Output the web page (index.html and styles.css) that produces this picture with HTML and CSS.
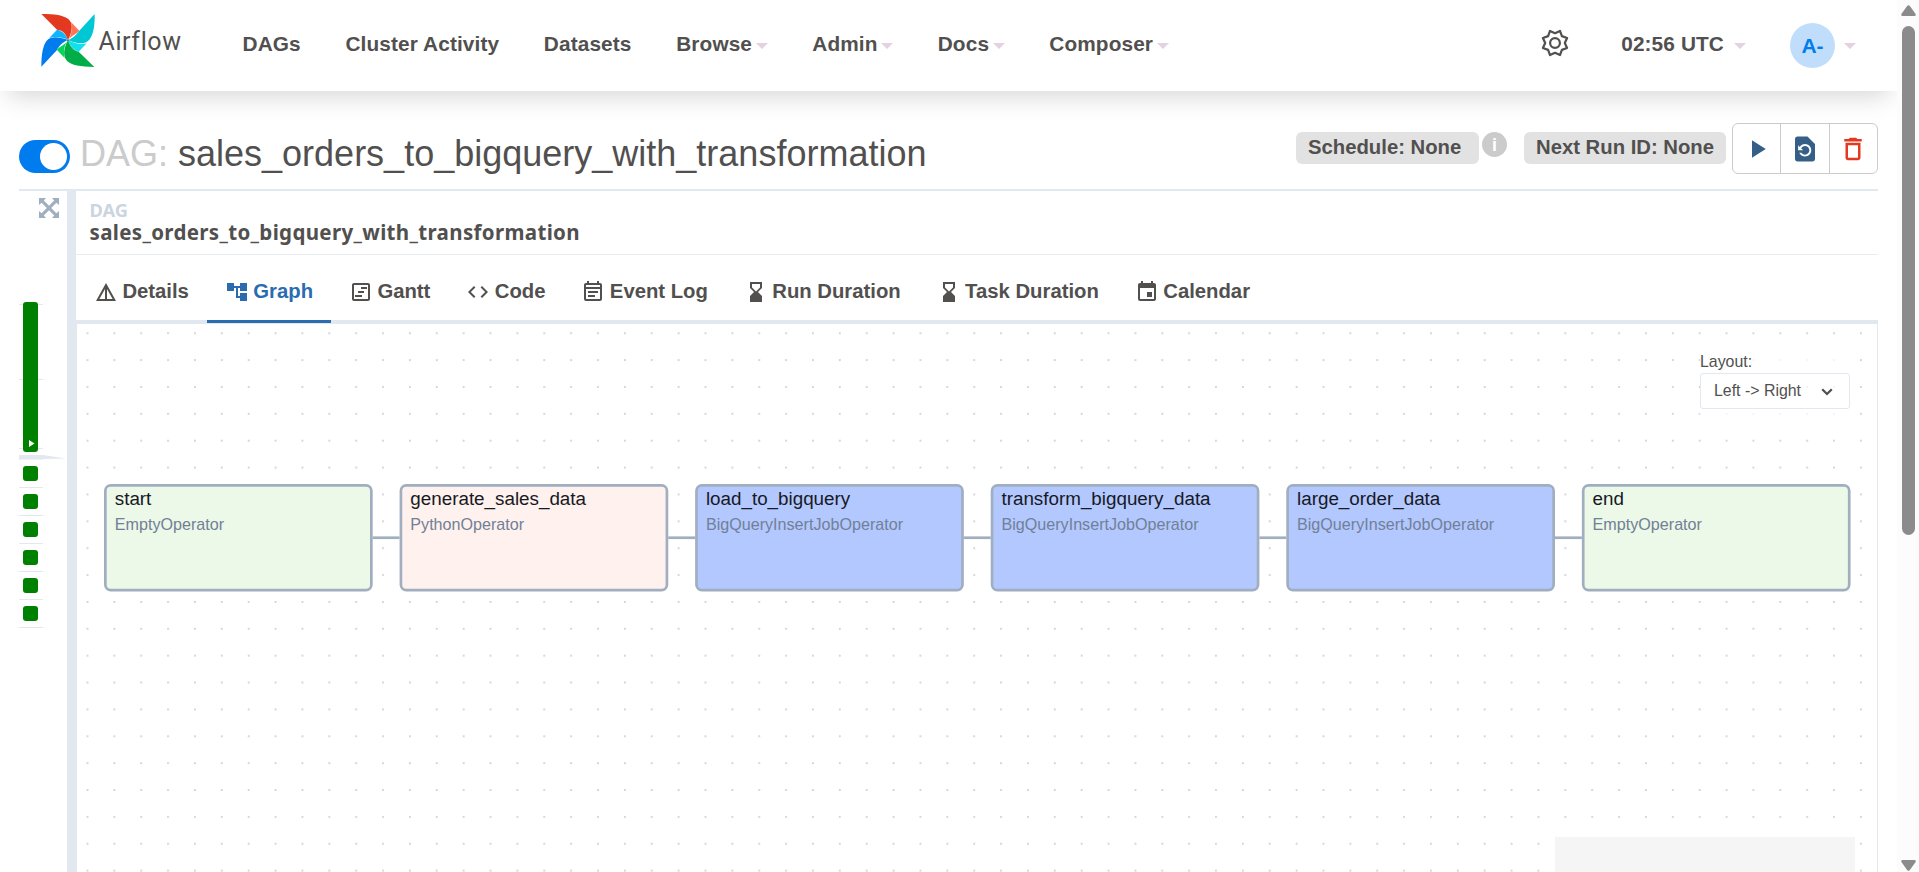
FILE: index.html
```html
<!DOCTYPE html>
<html lang="en">
<head>
<meta charset="utf-8">
<title>sales_orders_to_bigquery_with_transformation - Airflow</title>
<link rel="stylesheet" href="styles.css">
</head>
<body>
<div class="page">
  <header class="navbar">
    <a class="brand">
      <svg class="brand-mark" viewBox="120 40 168 166">
        <path fill="#017cee" d="M124 201C124 160 130 135 140 123C155 108 175 112 204 121C188 127 176 140 171 151Z"/>
        <path fill="#0cb6ff" d="M204 121C185 111 160 110 147 116L171 90C187 94 198 104 204 121Z"/>
        <path fill="#e43921" d="M124 43C165 43 190 47 205 58C219 70 219 92 204 121C198 104 190 92 171 90Z"/>
        <path fill="#ff7557" d="M213 67L238 93C230 103 214 108 204 121C215 104 218 85 213 67Z"/>
        <path fill="#00c7d4" d="M284 43C285 85 278 108 268 120C256 134 235 134 204 121C222 114 230 103 238 93Z"/>
        <path fill="#11e1ee" d="M204 121C225 133 245 135 260 131L236 156C222 152 210 140 204 121Z"/>
        <path fill="#00ad46" d="M283 202C240 202 215 196 202 185C188 170 190 148 204 121C210 141 222 154 236 156Z"/>
        <path fill="#04d659" d="M204 121C193 137 189 155 194 175L171 151C176 141 196 137 204 121Z"/>
        <circle cx="204" cy="122" r="2.5" fill="#51504f"/>
      </svg>
      <span class="brand-name">Airflow</span>
    </a>
    <nav class="menu">
      <a>DAGs</a>
      <a>Cluster Activity</a>
      <a>Datasets</a>
      <a>Browse<i class="caret"></i></a>
      <a>Admin<i class="caret"></i></a>
      <a>Docs<i class="caret"></i></a>
      <a>Composer<i class="caret"></i></a>
    </nav>
    <div class="account">
      <svg class="gear" viewBox="-14 -14 28 28" fill="none" stroke="#51504f" stroke-width="2.2" stroke-linejoin="round">
        <path d="M5 -12.1L0 -9.8L-5 -12.100L-6.900 -6.900L-12.100 -5L-9.800 0L-12.100 5L-6.900 6.900L-5 12.100L0 9.800L5 12.100L6.900 6.900L12.100 5L9.800 0L12.100 -5L6.900 -6.900Z"/>
        <circle r="4.9"/>
      </svg>
      <a class="clock">02:56 UTC<i class="caret"></i></a>
      <a class="user"><span class="avatar">A-</span><i class="caret"></i></a>
    </div>
  </header>

  <main class="content">
    <section class="dag-header">
      <span class="toggle"><span class="knob"></span></span>
      <h3 class="dag-title"><span class="muted">DAG:</span> sales_orders_to_bigquery_with_transformation</h3>
      <div class="dag-meta">
        <span class="pill schedule">Schedule: None</span>
        <span class="info">i</span>
        <span class="pill next-run">Next Run ID: None</span>
        <div class="actions">
          <button><svg viewBox="0 0 24 24" fill="#355f87"><path d="M8 5v14l11-7z"/></svg></button>
          <button><svg viewBox="0 0 24 24" fill="#355f87"><path d="M14 2H6c-1.1 0-1.99.9-1.99 2L4 20c0 1.1.89 2 1.99 2H18c1.1 0 2-.9 2-2V8l-6-6zm-2 16c-2.05 0-3.81-1.24-4.58-3h1.71c.63.9 1.68 1.5 2.87 1.5 1.93 0 3.5-1.57 3.5-3.5S13.93 9.5 12 9.5c-1.35 0-2.52.78-3.1 1.9l1.6 1.6h-4V9l1.3 1.3C8.69 8.92 10.23 8 12 8c2.76 0 5 2.24 5 5s-2.24 5-5 5z"/></svg></button>
          <button><svg viewBox="0 0 24 24" fill="#e43921"><path d="M6 19c0 1.1.9 2 2 2h8c1.1 0 2-.9 2-2V7H6v12zM8 9h8v10H8V9zm7.5-5l-1-1h-5l-1 1H5v2h14V4z"/></svg></button>
        </div>
      </div>
    </section>

    <section class="workspace">
      <aside class="grid">
        <svg class="expand" viewBox="0 0 20 20" fill="#a0aec0"><path d="M0 0h7L4.8 2.6 10 7.8l5.2-5.2L13 0h7v7l-2.6-2.2L12.2 10l5.2 5.2L20 13v7h-7l2.2-2.6L10 12.2l-5.2 5.2L7 20H0v-7l2.6 2.2L7.8 10 2.600 4.800 0 7z"/></svg>
        <div class="duration">
          <div class="bar"><svg viewBox="0 0 6 7" fill="#fff"><path d="M0 0v7l5.500-3.500z"/></svg></div>
        </div>
        <svg class="wedge" viewBox="0 0 48 4"><path fill="#e2e8f0" d="M0 0h24l23 3.600L24 4H0z"/></svg>
        <div class="task"></div>
        <div class="task"></div>
        <div class="task"></div>
        <div class="task"></div>
        <div class="task"></div>
        <div class="task"></div>
      </aside>
      <div class="divider"></div>
      <div class="details">
        <div class="crumb">
          <span class="crumb-label">DAG</span>
          <span class="crumb-name">sales_orders_to_bigquery_with_transformation</span>
        </div>
        <div class="tabs">
          <a class="tab"><svg viewBox="0 0 24 24"><path d="M12 3 2 21h20L12 3zm1 5.920L18.600 19H13V8.920zm-2 0V19H5.400L11 8.920z"/></svg>Details</a>
          <a class="tab active"><svg viewBox="0 0 24 24"><path d="M22 11V3h-7v3H9V3H2v8h7V8h2v10h4v3h7v-8h-7v3h-2V8h2v3z"/></svg>Graph</a>
          <a class="tab"><svg viewBox="0 0 24 24"><path d="M19 3H5c-1.100 0-2 .9-2 2v14c0 1.100.9 2 2 2h14c1.100 0 2-.9 2-2V5c0-1.100-.9-2-2-2zm0 16H5V5h14v14zM12 7h6v2h-6zM9 11h6v2H9zM6 15h7v2H6z"/></svg>Gantt</a>
          <a class="tab"><svg viewBox="0 0 24 24"><path d="M9.400 16.600 4.800 12l4.600-4.600L8 6l-6 6 6 6 1.400-1.400zm5.200 0 4.600-4.600-4.600-4.600L16 6l6 6-6 6-1.400-1.400z"/></svg>Code</a>
          <a class="tab"><svg viewBox="0 0 24 24"><path d="M19 3h-1V1h-2v2H8V1H6v2H5c-1.100 0-2 .9-2 2v14a2 2 0 0 0 2 2h14c1.100 0 2-.9 2-2V5c0-1.100-.9-2-2-2zm0 16H5V9h14v10zm0-12H5V5h14v2zM7 11h10v2H7zm0 4h7v2H7z"/></svg>Event Log</a>
          <a class="tab"><svg viewBox="0 0 24 24"><path d="M18 22l-.01-6L14 12l3.990-4.010L18 2H6v6l4 4-4 3.990V22h12zM8 7.500V4h8v3.500l-4 4-4-4z"/></svg>Run Duration</a>
          <a class="tab"><svg viewBox="0 0 24 24"><path d="M18 22l-.01-6L14 12l3.990-4.010L18 2H6v6l4 4-4 3.990V22h12zM8 7.500V4h8v3.500l-4 4-4-4z"/></svg>Task Duration</a>
          <a class="tab"><svg viewBox="0 0 24 24"><path d="M17 12h-5v5h5v-5zM16 1v2H8V1H6v2H5c-1.110 0-1.990.9-1.990 2L3 19a2 2 0 0 0 2 2h14c1.100 0 2-.9 2-2V5c0-1.100-.9-2-2-2h-1V1h-2zm3 18H5V8h14v11z"/></svg>Calendar</a>
        </div>
        <div class="graph">
          <svg class="dots" width="1800" height="548">
            <defs><pattern id="dot" x="-3.400" y="-4.700" width="26.870" height="26.870" patternUnits="userSpaceOnUse"><circle cx="13.900" cy="13.900" r=".67" fill="#91919a"/></pattern></defs>
            <rect width="1800" height="548" fill="url(#dot)"/>
          </svg>
          <div class="layout-picker">
            <label>Layout:</label>
            <div class="select">Left -&gt; Right
              <svg viewBox="0 0 12 8" fill="none" stroke="#51504f" stroke-width="2.300"><path d="M1.200 1.300L6 6l4.800-4.700"/></svg>
            </div>
          </div>
          <div class="flow">
            <div class="node empty"><b>start</b><span>EmptyOperator</span></div>
            <i class="edge"></i>
            <div class="node python"><b>generate_sales_data</b><span>PythonOperator</span></div>
            <i class="edge"></i>
            <div class="node bigquery"><b>load_to_bigquery</b><span>BigQueryInsertJobOperator</span></div>
            <i class="edge"></i>
            <div class="node bigquery"><b>transform_bigquery_data</b><span>BigQueryInsertJobOperator</span></div>
            <i class="edge"></i>
            <div class="node bigquery"><b>large_order_data</b><span>BigQueryInsertJobOperator</span></div>
            <i class="edge"></i>
            <div class="node empty"><b>end</b><span>EmptyOperator</span></div>
          </div>
          <div class="minimap"></div>
        </div>
      </div>
    </section>
  </main>
</div>
<div class="scrollbar">
  <svg viewBox="0 0 15 11" fill="#8b8b8b"><path d="M6.300.8Q7.500-.4 8.700.8L14.600 9Q15.200 11 13.500 11H1.500Q-.2 11 .4 9Z"/></svg>
  <div class="thumb"></div>
  <svg class="down" viewBox="0 0 15 11" fill="#8b8b8b"><path d="M6.300 10.200Q7.500 11.400 8.700 10.200L14.600 2Q15.200 0 13.500 0H1.500Q-.2 0 .4 2Z"/></svg>
</div>
</body>
</html>
```
FILE: styles.css
```css
* { box-sizing: border-box; }

body {
  margin: 0;
  height: 872px;
  overflow: hidden;
  display: flex;
  background: #fff;
  color: #51504f;
  font-family: "Liberation Sans", Arial, sans-serif;
}

svg { display: block; flex: none; }

.page { width: 1897px; height: 872px; display: flex; flex-direction: column; overflow: hidden; }

/* Top navigation */
.navbar {
  flex: none;
  height: 91px;
  display: flex;
  align-items: flex-start;
  padding-left: 40px;
  background: #fff;
  box-shadow: 0 13px 24px -8px rgba(0, 0, 0, .17);
}
.brand { display: flex; width: 202.5px; padding-top: 13px; }
.brand-mark { width: 56px; height: 55.3px; }
.brand-name {
  margin-left: 2.5px;
  padding-top: 14px;
  font: 400 25px/30px Roboto, sans-serif;
  letter-spacing: .6px;
}
.menu { display: flex; gap: 44.7px; }
.menu a, .clock {
  display: flex;
  align-items: center;
  height: 24px;
  margin-top: 32px;
  font-size: 20.8px;
  font-weight: 700;
  letter-spacing: .12px;
  white-space: nowrap;
}
.caret {
  margin: 4px 0 0 3.5px;
  border: 6px solid transparent;
  border-top-color: #e2d2e2;
  border-bottom: 0;
}
.account { display: flex; margin-left: auto; padding-right: 41px; }
.gear { width: 28px; height: 28px; margin: 29px 52px 0 0; }
.clock .caret { margin-left: 10px; }
.user { display: flex; margin: 23px 0 0 44px; }
.avatar {
  width: 45px;
  height: 45px;
  border-radius: 50%;
  background: #c0defc;
  color: #017cee;
  font-size: 21px;
  font-weight: 700;
  line-height: 46px;
  text-align: center;
}
.user .caret { margin: 20px 0 0 9px; height: 6px; }

/* DAG heading */
.content { flex: 1; padding: 32px 19px 0; }
.dag-header {
  display: flex;
  height: 68px;
  border-bottom: 2px solid #e2e8f0;
}
.toggle {
  width: 51px;
  height: 33px;
  margin-top: 17px;
  padding: 3px;
  border-radius: 17px;
  background: #017cee;
  display: flex;
  justify-content: flex-end;
}
.knob { width: 27px; height: 27px; border-radius: 50%; background: #fff; }
.dag-title {
  margin: 10px 0 0 10px;
  font-size: 36px;
  font-weight: 400;
  line-height: 42px;
  white-space: nowrap;
}
.muted { color: #cbcbcb; }
.dag-meta { display: flex; align-items: flex-start; margin-left: auto; }
.pill {
  height: 32px;
  margin-top: 9px;
  border-radius: 6px;
  background: #e2e2e2;
  padding-left: 12px;
  font-size: 20.3px;
  font-weight: 700;
  line-height: 30px;
  white-space: nowrap;
}
.schedule { width: 183px; }
.info {
  width: 25px;
  height: 25px;
  margin: 9px 17px 0 3px;
  border-radius: 50%;
  background: #cbcbcb;
  color: #fff;
  font-size: 18px;
  font-weight: 700;
  line-height: 26px;
  text-align: center;
}
.next-run { width: 202px; margin-right: 6px; }
.actions {
  display: flex;
  width: 146px;
  height: 51px;
  border: 1px solid #cbcbcb;
  border-radius: 6px;
}
.actions button {
  flex: 1;
  display: flex;
  align-items: center;
  justify-content: center;
  padding: 0;
  border: 0;
  background: none;
}
.actions button + button { border-left: 1px solid #cbcbcb; }
.actions svg { width: 30px; height: 30px; }

/* Run grid */
.workspace { display: flex; height: 681px; }
.grid { width: 48px; flex: none; }
.expand { width: 20px; height: 20px; margin: 7px 0 0 20px; }
.duration {
  width: 24px;
  height: 150px;
  margin-top: 84px;
  padding-left: 4px;
  background:
    linear-gradient(#e2e8f0, #e2e8f0) 0 2px / 24px 1px no-repeat,
    linear-gradient(#e2e8f0, #e2e8f0) 0 77px / 24px 1px no-repeat,
    linear-gradient(#e2e8f0, #e2e8f0) 0 146px / 24px 1px no-repeat;
}
.bar {
  width: 15px;
  height: 150px;
  padding: 137.5px 0 0 6px;
  border-radius: 3px;
  background: #008000;
}
.bar svg { width: 6px; height: 7px; }
.wedge { width: 48px; height: 4px; margin: 3px 0 0; }
.task { width: 24px; height: 28px; padding: 6px 0 0 4px; border-bottom: 1px solid #e2e8f0; }
.wedge + .task { height: 29px; border-top: 1px solid #edf2f7; }
.task::before {
  content: "";
  display: block;
  width: 15px;
  height: 15px;
  border-radius: 3px;
  background: #008000;
}
.divider { width: 9px; flex: none; background: #e2e8f0; }

/* Details panel */
.details { flex: 1; display: flex; flex-direction: column; }
.crumb {
  display: flex;
  flex-direction: column;
  height: 64px;
  padding: 8px 0 0 13.5px;
  border-bottom: 1px solid #e8edf2;
  font-family: "Noto Sans", sans-serif;
  font-weight: 700;
  white-space: nowrap;
}
.crumb-label { color: #cbd5e0; font-size: 18.3px; line-height: 22px; }
.crumb-name { font-size: 20.5px; line-height: 22px; letter-spacing: .34px; }
.tabs { display: flex; height: 69px; border-bottom: 4px solid #e2e8f0; }
.tab {
  display: flex;
  align-items: center;
  gap: 4.4px;
  height: 68px;
  padding: 7px 18px 0;
  border-bottom: 3px solid transparent;
  font-size: 20.3px;
  font-weight: 700;
  white-space: nowrap;
}
.tab svg { width: 24px; height: 24px; fill: currentColor; margin-top: 1px; }
.tab.active { color: #2b6cb0; border-bottom-color: #2b6cb0; }

/* Graph canvas */
.graph {
  position: relative;
  flex: 1;
  border: 1px solid #e2e8f0;
  border-width: 0 1px;
}
.dots { position: absolute; left: 0; top: 0; }
.layout-picker {
  position: absolute;
  right: 27px;
  top: 27px;
  width: 150px;
  height: 66px;
  background: rgba(255, 255, 255, .7);
  font-size: 15.9px;
}
.layout-picker label { display: block; height: 22px; line-height: 22px; }
.select {
  display: flex;
  align-items: center;
  justify-content: space-between;
  height: 36px;
  padding: 0 16px 0 13px;
  border: 1px solid #e2e8f0;
  border-radius: 3px;
}
.select svg { width: 12px; height: 8px; margin-top: 1px; }
.flow {
  position: absolute;
  left: 26.7px;
  top: 159.5px;
  display: flex;
  transform: scale(1.3435);
  transform-origin: 0 0;
}
.node {
  width: 200px;
  height: 80px;
  padding: 0 0 0 6px;
  border: 2px solid #a0aec0;
  border-radius: 5px;
  display: flex;
  flex-direction: column;
}
.node b { color: #171923; font-size: 14px; font-weight: 400; line-height: 18px; }
.node span { margin-top: 1.8px; color: #718096; font-size: 12px; line-height: 16px; }
.empty { background: #ecf8e8; }
.python { background: #fff1ee; }
.bigquery { background: #b3c8ff; }
.edge { width: 20px; height: 2px; margin-top: 39px; background: #a0aec0; }
.minimap { position: absolute; right: 22px; top: 513px; width: 300px; height: 40px; background: #f5f5f5; }

/* Window scrollbar */
.scrollbar {
  width: 22px;
  height: 872px;
  padding: 5px 3px 1px 4px;
  background: #fcfcfc;
  display: flex;
  flex-direction: column;
}
.scrollbar svg { width: 15px; height: 11px; }
.thumb { width: 13px; height: 509px; margin: 10px 0 0 1px; border-radius: 7px; background: #8b8b8b; }
.down { margin-top: auto; }
```
